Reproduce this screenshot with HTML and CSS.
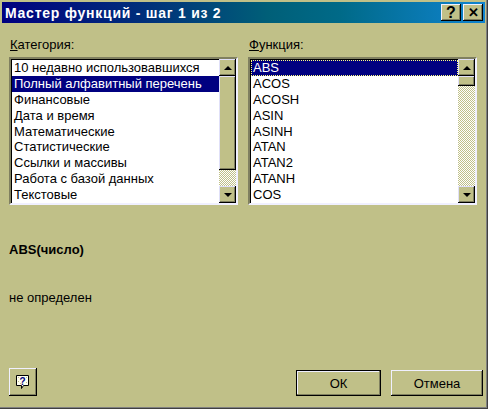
FILE: index.html
```html
<!DOCTYPE html>
<html>
<head>
<meta charset="utf-8">
<link rel="stylesheet" href="styles.css">
</head>
<body>
<div class="window">
  <div class="titlebar">
    <span class="title">Мастер функций - шаг 1 из 2</span>
    <div class="tbtns">
      <div class="tbtn">?</div>
      <div class="tbtn x">✕</div>
    </div>
  </div>
  <div class="content">
    <div class="cols">
      <div class="col">
        <div class="label"><u>К</u>атегория:</div>
        <div class="listbox">
          <div class="items">
            <div class="item">10 недавно использовавшихся</div>
            <div class="item sel">Полный алфавитный перечень</div>
            <div class="item">Финансовые</div>
            <div class="item">Дата и время</div>
            <div class="item">Математические</div>
            <div class="item">Статистические</div>
            <div class="item">Ссылки и массивы</div>
            <div class="item">Работа с базой данных</div>
            <div class="item">Текстовые</div>
          </div>
          <div class="scroll">
            <div class="sbtn"><span class="arr up"></span></div>
            <div class="thumb big"></div>
            <div class="track"></div>
            <div class="sbtn"><span class="arr down"></span></div>
          </div>
        </div>
      </div>
      <div class="col">
        <div class="label"><u>Ф</u>ункция:</div>
        <div class="listbox">
          <div class="items">
            <div class="item sel focus">ABS</div>
            <div class="item">ACOS</div>
            <div class="item">ACOSH</div>
            <div class="item">ASIN</div>
            <div class="item">ASINH</div>
            <div class="item">ATAN</div>
            <div class="item">ATAN2</div>
            <div class="item">ATANH</div>
            <div class="item">COS</div>
          </div>
          <div class="scroll">
            <div class="sbtn"><span class="arr up"></span></div>
            <div class="thumb small"></div>
            <div class="track"></div>
            <div class="sbtn"><span class="arr down"></span></div>
          </div>
        </div>
      </div>
    </div>
    <div class="syntax">ABS(число)</div>
    <div class="desc">не определен</div>
    <div class="footer">
      <div class="btn help">
        <svg width="16" height="16" viewBox="0 0 16 16">
          <path d="M1.5 1.5h12v10h-5l-2 3v-3h-5z" fill="#fffff0" stroke="#000"/>
          <path d="M3 3h1v1H3zM5 5h1v1H5zM3 7h1v1H3zM11 3h1v1h-1zM11 8h1v1h-1zM5 9h1v1H5z" fill="#c0c088"/>
          <text x="7.5" y="10.5" text-anchor="middle" class="q">?</text>
        </svg>
      </div>
      <div class="spacer"></div>
      <div class="btn ok">ОК</div>
      <div class="btn cancel">Отмена</div>
    </div>
  </div>
</div>
</body>
</html>
```
FILE: styles.css
```css
html, body {
  margin: 0;
  padding: 0;
  background: #c0c088;
}
.window {
  width: 488px;
  height: 409px;
  box-sizing: border-box;
  padding: 2px 3px 0 2px;
  background: #c0c088;
  font-family: "Liberation Sans", Arial, sans-serif;
  font-size: 13px;
  color: #000;
  box-shadow: inset -1px -1px 0 #404040, inset -2px -2px 0 #808080;
  display: flex;
  flex-direction: column;
}
.titlebar {
  height: 21px;
  display: flex;
  align-items: center;
  padding-left: 3px;
  background: linear-gradient(to right, #000080 0%, #00307a 30%, #005f78 55%, #006a88 70%, #1084d0 100%);
}
.title {
  color: #fff;
  font-weight: bold;
  font-size: 14px;
  letter-spacing: 0.75px;
  flex: 1;
  white-space: nowrap;
}
.tbtns {
  display: flex;
  gap: 2px;
  margin-right: 2px;
}
.tbtn {
  width: 20px;
  height: 17px;
  box-sizing: border-box;
  background: #c0c088;
  box-shadow: inset -1px -1px 0 #000, inset 1px 1px 0 #f0f0ff, inset -2px -2px 0 #808060;
  font-weight: bold;
  font-size: 16px;
  line-height: 17px;
  text-align: center;
  color: #000;
}
.tbtn.x {
  font-size: 13px;
}
.content {
  flex: 1;
  display: flex;
  flex-direction: column;
  padding: 14px 0 0 7px;
}
.cols {
  display: flex;
  gap: 10px;
}
.col {
  width: 229px;
  display: flex;
  flex-direction: column;
}
.label {
  line-height: 15px;
  padding-left: 1px;
  margin-bottom: 5px;
}
.listbox {
  height: 148px;
  box-sizing: border-box;
  border: 2px solid;
  border-color: #808060 #f0f0ff #f0f0ff #808060;
  box-shadow: inset 1px 1px 0 #000;
  background: #fff;
  display: flex;
  padding: 1px 0 0 1px;
}
.items {
  flex: 1;
  display: flex;
  flex-direction: column;
}
.item {
  height: 16px;
  line-height: 16px;
  padding-left: 2px;
  white-space: nowrap;
  overflow: hidden;
}
.item.sel {
  background: #000080;
  color: #fff;
}
.item.focus {
  outline: 1px dotted #ffff80;
  outline-offset: -1px;
}
.scroll {
  width: 17px;
  display: flex;
  flex-direction: column;
  margin-top: -1px;
}
.sbtn, .thumb {
  background: #c0c088;
  box-sizing: border-box;
  box-shadow: inset -1px -1px 0 #000, inset 1px 1px 0 #e0e0f8, inset -2px -2px 0 #808060;
}
.sbtn {
  height: 17px;
  display: flex;
  align-items: center;
  justify-content: center;
}
.thumb.big {
  height: 94px;
}
.thumb.small {
  height: 10px;
}
.track {
  flex: 1;
  background: repeating-conic-gradient(#ffffff 0 25%, #c0c088 0 50%) 0 0 / 2px 2px;
}
.arr {
  width: 0;
  height: 0;
  border-left: 4px solid transparent;
  border-right: 4px solid transparent;
}
.arr.up {
  border-bottom: 4px solid #000;
}
.arr.down {
  border-top: 4px solid #000;
}
.syntax {
  font-weight: bold;
  line-height: 15px;
  margin-top: 37px;
}
.desc {
  line-height: 15px;
  margin-top: 33px;
}
.footer {
  display: flex;
  align-items: flex-end;
  margin-top: 63px;
}
.spacer {
  flex: 1;
}
.btn {
  background: #c0c088;
  box-sizing: border-box;
  box-shadow: inset -1px -1px 0 #000, inset 1px 1px 0 #f0f0ff, inset -2px -2px 0 #808060;
  display: flex;
  align-items: center;
  justify-content: center;
}
.help {
  width: 28px;
  height: 28px;
}
.q {
  font-family: "Liberation Sans", Arial, sans-serif;
  font-weight: bold;
  font-size: 10px;
  fill: #000080;
}
.ok {
  width: 85px;
  height: 26px;
  box-shadow: inset 0 0 0 1px #000, inset -2px -2px 0 #808060, inset 2px 2px 0 #f0f0ff;
}
.cancel {
  width: 92px;
  height: 26px;
  margin-left: 10px;
  margin-right: 2px;
}
```
